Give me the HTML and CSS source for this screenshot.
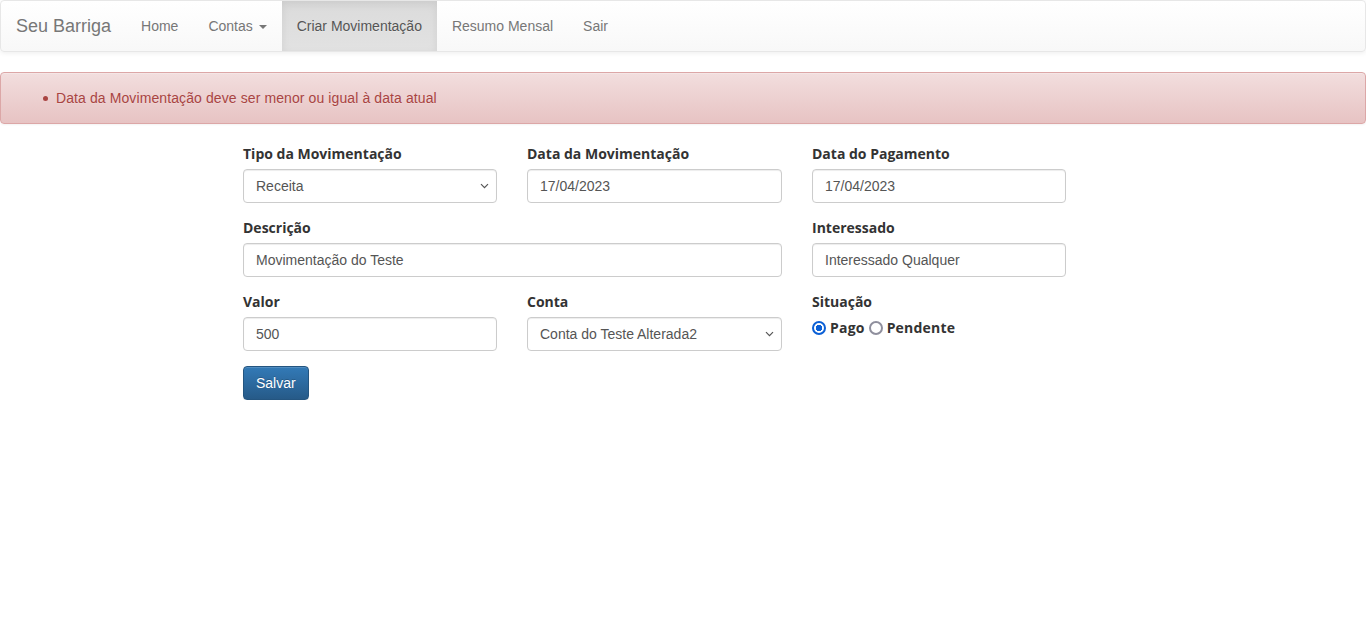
FILE: index.html
```html
<!DOCTYPE html>
<html lang="pt-BR">
<head>
<meta charset="utf-8">
<title>Seu Barriga - Criar Movimentação</title>
<link rel="stylesheet" href="styles.css">
</head>
<body>
<nav class="navbar">
  <a class="brand" href="#">Seu Barriga</a>
  <ul class="nav">
    <li><a href="#">Home</a></li>
    <li><a href="#">Contas <span class="caret"></span></a></li>
    <li class="active"><a href="#">Criar Movimentação</a></li>
    <li><a href="#">Resumo Mensal</a></li>
    <li><a href="#">Sair</a></li>
  </ul>
</nav>
<div class="alert">
  <ul>
    <li>Data da Movimentação deve ser menor ou igual à data atual</li>
  </ul>
</div>
<form class="mov-form">
  <div class="grid">
    <div class="group">
      <label class="lbl" for="tipo">Tipo da Movimentação</label>
      <select id="tipo" class="control select"><option>Receita</option><option>Despesa</option></select>
    </div>
    <div class="group">
      <label class="lbl" for="dtm">Data da Movimentação</label>
      <input id="dtm" class="control" type="text" value="17/04/2023">
    </div>
    <div class="group">
      <label class="lbl" for="dtp">Data do Pagamento</label>
      <input id="dtp" class="control" type="text" value="17/04/2023">
    </div>
    <div class="group span2">
      <label class="lbl" for="desc">Descrição</label>
      <input id="desc" class="control" type="text" value="Movimentação do Teste">
    </div>
    <div class="group">
      <label class="lbl" for="int">Interessado</label>
      <input id="int" class="control" type="text" value="Interessado Qualquer">
    </div>
    <div class="group">
      <label class="lbl" for="valor">Valor</label>
      <input id="valor" class="control" type="text" value="500">
    </div>
    <div class="group">
      <label class="lbl" for="conta">Conta</label>
      <select id="conta" class="control select"><option>Conta do Teste Alterada2</option></select>
    </div>
    <div class="group">
      <span class="lbl">Situação</span>
      <div class="radios">
        <input id="pago" class="radio" type="radio" name="status" checked>
        <label class="rlbl" for="pago">Pago</label>
        <input id="pend" class="radio second" type="radio" name="status">
        <label class="rlbl" for="pend">Pendente</label>
      </div>
    </div>
  </div>
  <button type="button" class="btn">Salvar</button>
</form>
</body>
</html>
```
FILE: styles.css
```css
* { box-sizing: border-box; }
body {
  margin: 0;
  font-family: "Liberation Sans", Arial, Helvetica, sans-serif;
  font-size: 14px;
  line-height: 20px;
  color: #333;
  background: #fff;
}
.navbar {
  display: flex;
  align-items: stretch;
  min-height: 52px;
  padding: 0 15px;
  border: 1px solid #e7e7e7;
  border-radius: 4px;
  background-image: linear-gradient(to bottom, #fff 0, #f8f8f8 100%);
  box-shadow: inset 0 1px 0 rgba(255,255,255,.15), 0 1px 5px rgba(0,0,0,.075);
  margin-bottom: 20px;
}
.brand {
  margin-left: -15px;
  padding: 15px;
  font-size: 18px;
  line-height: 20px;
  color: #777;
  text-decoration: none;
  text-shadow: 0 1px 0 rgba(255,255,255,.25);
}
.nav {
  display: flex;
  list-style: none;
  margin: 0;
  padding: 0;
}
.nav a {
  display: block;
  padding: 15px;
  color: #777;
  text-decoration: none;
  text-shadow: 0 1px 0 rgba(255,255,255,.25);
}
.nav .active a {
  color: #555;
  background-image: linear-gradient(to bottom, #dbdbdb 0, #e2e2e2 100%);
  box-shadow: inset 0 3px 9px rgba(0,0,0,.075);
}
.caret {
  display: inline-block;
  width: 0;
  height: 0;
  margin-left: 2px;
  vertical-align: middle;
  border-top: 4px solid;
  border-right: 4px solid transparent;
  border-left: 4px solid transparent;
}
.alert {
  padding: 15px;
  margin-bottom: 20px;
  border: 1px solid #dca7a7;
  border-radius: 4px;
  color: #a94442;
  background-image: linear-gradient(to bottom, #f2dede 0, #e7c3c3 100%);
  text-shadow: 0 1px 0 rgba(255,255,255,.2);
  box-shadow: inset 0 1px 0 rgba(255,255,255,.25), 0 1px 2px rgba(0,0,0,.05);
  letter-spacing: 0.1px;
}
.alert ul {
  margin: 0;
  padding-left: 40px;
  list-style: none;
}
.alert li {
  position: relative;
}
.alert li::before {
  content: "";
  position: absolute;
  left: -13px;
  top: 8px;
  width: 5px;
  height: 5px;
  border-radius: 50%;
  background: #a94442;
}
.mov-form {
  width: 824px;
  margin-left: 243px;
}
.grid {
  display: grid;
  grid-template-columns: 254px 255px 254px;
  column-gap: 30px;
  row-gap: 15px;
}
.span2 { grid-column: span 2; }
.group {
  display: flex;
  flex-direction: column;
}
.lbl {
  display: block;
  font-family: "Open Sans", "Liberation Sans", Arial, sans-serif;
  font-weight: 700;
  font-size: 14px;
  margin-bottom: 5px;
  color: #333;
}
.control {
  display: block;
  width: 100%;
  height: 34px;
  padding: 6px 12px;
  font-family: inherit;
  font-size: 14px;
  line-height: 20px;
  color: #555;
  background-color: #fff;
  border: 1px solid #ccc;
  border-radius: 4px;
  box-shadow: inset 0 1px 1px rgba(0,0,0,.075);
}
.select {
  appearance: none;
  -webkit-appearance: none;
  padding: 6px 28px 6px 12px;
  background-image: url("data:image/svg+xml,%3Csvg xmlns='http://www.w3.org/2000/svg' width='9' height='6' viewBox='0 0 9 6'%3E%3Cpath d='M1 1.2 4.5 4.7 8 1.2' fill='none' stroke='%23555' stroke-width='1.2'/%3E%3C/svg%3E");
  background-repeat: no-repeat;
  background-position: right 7px center;
  background-size: 9px 6px;
}
.radios {
  display: flex;
  align-items: center;
  height: 20px;
  margin-top: 1px;
}
.radio {
  appearance: none;
  -webkit-appearance: none;
  width: 14px;
  height: 14px;
  margin: 0 4px 0 0;
  border: 2px solid #8f8f9d;
  border-radius: 50%;
  background: #fff;
  flex: none;
}
.radio:checked {
  border-color: #0b60d6;
  background: radial-gradient(circle, #0b60d6 0 3px, #fff 3.5px);
}
.radio.second {
  margin-left: 4px;
}
.rlbl {
  font-family: "Open Sans", "Liberation Sans", Arial, sans-serif;
  font-weight: 700;
  letter-spacing: 0.2px;
}
.btn {
  display: inline-block;
  margin-top: 15px;
  height: 34px;
  padding: 6px 12px;
  font-family: inherit;
  font-size: 14px;
  line-height: 20px;
  color: #fff;
  border: 1px solid #245580;
  border-radius: 4px;
  background-image: linear-gradient(to bottom, #337ab7 0, #265a88 100%);
  text-shadow: 0 -1px 0 rgba(0,0,0,.2);
  box-shadow: inset 0 1px 0 rgba(255,255,255,.15), 0 1px 1px rgba(0,0,0,.075);
  cursor: pointer;
}
```
